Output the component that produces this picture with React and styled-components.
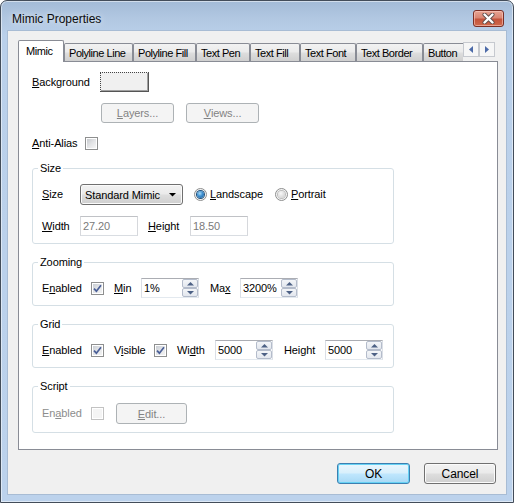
import React from 'react';
import styled, { createGlobalStyle } from 'styled-components';

const Global = createGlobalStyle`
  html, body { margin: 0; padding: 0; background: #fff; }
  body { font-family: "Liberation Sans", Arial, sans-serif; font-size: 11px; color: #000; letter-spacing: -0.1px; }
  * { box-sizing: border-box; }
`;

const Window = styled.div`
  width: 514px;
  height: 503px;
  border: 1px solid #434d5a;
  border-radius: 7px 7px 0 0;
  background: linear-gradient(to bottom, #a3bbd7 0px, #b2c8e2 18px, #bad0ea 34px, #bcd2ec 100%);
  box-shadow: inset 0 0 0 1px rgba(255, 255, 255, 0.5);
  display: flex;
  flex-direction: column;
  overflow: hidden;
`;

const TitleBar = styled.div`
  height: 29px;
  flex-shrink: 0;
  display: flex;
  align-items: center;
  justify-content: space-between;
  padding: 6px 9px 0 11px;
`;

const Title = styled.span`
  font-size: 12px;
  letter-spacing: 0;
  color: #0b0b0b;
  text-shadow: 0 0 6px rgba(255, 255, 255, 0.9);
`;

const CloseButton = styled.div`
  width: 31px;
  height: 17px;
  border: 1px solid #7a2f25;
  border-radius: 3px;
  background: linear-gradient(to bottom, #e8a493 0%, #d98673 45%, #c4533b 55%, #cf6a4d 100%);
  box-shadow: inset 0 0 0 1px rgba(255, 210, 200, 0.55);
  display: flex;
  align-items: center;
  justify-content: center;
`;

const Client = styled.div`
  flex: 1;
  margin: 0 6px 7px;
  border: 1px solid #a8bcd4;
  background: #f0f0f0;
  padding: 9px 8px 0 10px;
  display: flex;
  flex-direction: column;
`;

const TabRow = styled.div`
  display: flex;
  height: 21px;
  flex-shrink: 0;
  position: relative;
  z-index: 1;
`;

const TabStrip = styled.div`
  display: flex;
  align-items: flex-start;
  width: 445px;
  height: 22px;
  overflow: hidden;
  flex-shrink: 0;
`;

const Tab = styled.div`
  flex-shrink: 0;
  width: ${p => p.$w}px;
  height: ${p => (p.$sel ? 22 : 18)}px;
  margin-top: ${p => (p.$sel ? 0 : 3)}px;
  border: 1px solid #898c95;
  border-bottom: none;
  border-radius: 2px 2px 0 0;
  background: ${p =>
    p.$sel
      ? '#fff'
      : 'linear-gradient(to bottom, #f2f2f2 0%, #ebebeb 45%, #dddddd 55%, #cfcfcf 100%)'};
  display: flex;
  align-items: center;
  padding: ${p => (p.$sel ? '0 0 2px 7px' : '0 0 0 4px')};
  white-space: nowrap;
  letter-spacing: -0.45px;
  overflow: hidden;
`;

const TabScroll = styled.div`
  display: flex;
  margin-top: 2px;
`;

const ScrollBtn = styled.div`
  width: 16px;
  height: 15px;
  border: 1px solid #c6c9cf;
  background: #f6f6f6;
  display: flex;
  align-items: center;
  justify-content: center;
`;

const Panel = styled.div`
  height: 389px;
  flex-shrink: 0;
  border: 1px solid #898c95;
  background: #fff;
  padding: 10px 13px 0 13px;
  display: flex;
  flex-direction: column;
`;

const Row = styled.div`
  display: flex;
  align-items: center;
  height: ${p => p.$h || 20}px;
  margin-top: ${p => p.$mt || 0}px;
  padding-left: ${p => p.$pl || 0}px;
  gap: ${p => p.$gap || 0}px;
  flex-shrink: 0;
`;

const Label = styled.span`
  flex-shrink: 0;
  width: ${p => (p.$w ? `${p.$w}px` : 'auto')};
  color: ${p => (p.$disabled ? '#8d8d8d' : '#000')};
  white-space: nowrap;
  line-height: 13px;
`;

const ColorButton = styled.div`
  width: 49px;
  height: 20px;
  background: #f0f0f0;
  border-top: 1px dotted #444;
  border-left: 1px dotted #444;
  border-right: 1px solid #555;
  border-bottom: 1px solid #555;
  box-shadow: inset -1px -1px 0 #a0a0a0;
`;

const Button = styled.div`
  flex-shrink: 0;
  width: ${p => p.$w}px;
  height: ${p => p.$h || 20}px;
  border-radius: 3px;
  display: flex;
  align-items: center;
  justify-content: center;
  border: 1px solid ${p => (p.$disabled ? '#adb2b5' : p.$default ? '#3c7fb1' : '#707070')};
  color: ${p => (p.$disabled ? '#838383' : '#000')};
  background: ${p =>
    p.$disabled
      ? '#f4f4f4'
      : p.$default
      ? 'linear-gradient(to bottom, #eaf6fd 0%, #d9f0fc 45%, #bee6fd 55%, #a7d9f5 100%)'
      : 'linear-gradient(to bottom, #f2f2f2 0%, #ebebeb 45%, #dddddd 55%, #cfcfcf 100%)'};
  box-shadow: ${p =>
    p.$disabled ? 'none' : p.$default ? 'inset 0 0 0 1px #67d2f4' : 'inset 0 0 0 1px #fbfbfb'};
  margin-right: ${p => p.$mr || 0}px;
  font-size: ${p => (p.$big ? 12 : 11)}px;
`;

const CheckBox = styled.span`
  flex-shrink: 0;
  width: 13px;
  height: 13px;
  border: 1px solid ${p => (p.$disabled ? '#c2c2c2' : '#8e8f8f')};
  padding: 1px;
  background: #fff;
  margin-right: ${p => p.$mr || 0}px;
  display: flex;
`;

const CheckInner = styled.span`
  flex: 1;
  display: flex;
  align-items: center;
  justify-content: center;
  background: ${p =>
    p.$disabled
      ? '#f4f4f4'
      : p.$checked
      ? 'linear-gradient(135deg, #c9cdd3 0%, #e3e5e8 50%, #f2f2f2 100%)'
      : 'linear-gradient(135deg, #c6c9cd 0%, #e3e4e6 50%, #f6f6f6 100%)'};
`;

const Fieldset = styled.fieldset`
  margin: ${p => p.$mt || 0}px 0 0 0;
  width: 362px;
  border: 1px solid #d5dfe5;
  border-radius: 3px;
  padding: ${p => p.$pt || 9}px 9px ${p => p.$pb || 7}px 9px;
  display: flex;
  flex-direction: column;
  gap: 11px;
  flex-shrink: 0;
`;

const Legend = styled.legend`
  padding: 0 2px;
  margin-left: -4px;
  line-height: 13px;
  font-size: 11px;
  color: ${p => (p.$disabled ? '#8d8d8d' : '#000')};
`;

const Combo = styled.div`
  flex-shrink: 0;
  width: 103px;
  height: 21px;
  border: 1px solid #707070;
  border-radius: 3px;
  background: linear-gradient(to bottom, #f2f2f2 0%, #ebebeb 45%, #dddddd 55%, #cfcfcf 100%);
  box-shadow: inset 0 0 0 1px #fbfbfb;
  display: flex;
  align-items: center;
  justify-content: space-between;
  padding: 0 6px 0 4px;
  margin-right: 11px;
`;

const Radio = styled.span`
  flex-shrink: 0;
  width: 13px;
  height: 13px;
  border-radius: 50%;
  border: 1px solid #8e8f8f;
  background: #f4f4f4;
  display: flex;
  align-items: center;
  justify-content: center;
  margin-right: 3px;
`;

const RadioDot = styled.span`
  width: 7px;
  height: 7px;
  border-radius: 50%;
  background: ${p =>
    p.$on
      ? 'radial-gradient(circle at 40% 35%, #a9dcf7 0%, #3d8ed0 45%, #1c5a93 100%)'
      : 'radial-gradient(circle at 40% 35%, #f8f8f8 0%, #dcdcdc 60%, #c8c8c8 100%)'};
  box-shadow: ${p => (p.$on ? '0 0 0 1px #1f4f7a' : '0 0 0 1px #bcbcbc')};
`;

const RadioItem = styled.span`
  display: flex;
  align-items: center;
  width: ${p => (p.$w ? `${p.$w}px` : 'auto')};
  flex-shrink: 0;
`;

const TextBox = styled.div`
  flex-shrink: 0;
  width: 58px;
  height: 20px;
  border: 1px solid ${p => (p.$disabled ? '#c0c2c6' : '#abadb3')};
  border-left-color: ${p => (p.$disabled ? '#d6d8dc' : '#dbdfe6')};
  border-right-color: ${p => (p.$disabled ? '#d6d8dc' : '#dbdfe6')};
  border-bottom-color: ${p => (p.$disabled ? '#d9dde2' : '#e3e9ef')};
  background: #fff;
  color: ${p => (p.$disabled ? '#7a7a7a' : '#000')};
  display: flex;
  align-items: stretch;
  margin-right: ${p => p.$mr || 0}px;
`;

const TextValue = styled.span`
  flex: 1;
  display: flex;
  align-items: center;
  padding-left: 2px;
`;

const SpinCol = styled.span`
  width: 16px;
  display: flex;
  flex-direction: column;
`;

const SpinBtn = styled.span`
  flex: 1;
  border: 1px solid #b4bccb;
  border-radius: 2px;
  background: linear-gradient(to bottom, #f3f5f8 0%, #e3e7ee 100%);
  display: flex;
  align-items: center;
  justify-content: center;
`;

const Footer = styled.div`
  display: flex;
  justify-content: flex-end;
  gap: 14px;
  padding: 13px 2px 0 0;
`;

const Check = () => (
  <svg width="9" height="9" viewBox="0 0 9 9">
    <path d="M1 4.6 L3.4 7.2 L8 1.2" fill="none" stroke="#4a5f97" strokeWidth="1.7" />
  </svg>
);

const Tri = ({ dir, color = '#4a63a0' }) => {
  const d = {
    up: 'M0 3.5 L3.5 0 L7 3.5 Z',
    down: 'M0 0 L7 0 L3.5 3.5 Z',
  }[dir];
  return (
    <svg width="7" height="4" viewBox="0 0 7 4">
      <path d={d} fill={color} />
    </svg>
  );
};

const SideTri = ({ dir }) => (
  <svg width="4" height="7" viewBox="0 0 4 7">
    <path d={dir === 'left' ? 'M4 0 L0 3.5 L4 7 Z' : 'M0 0 L4 3.5 L0 7 Z'} fill="#4c6aa8" />
  </svg>
);

const CheckField = ({ checked, disabled, mr }) => (
  <CheckBox $disabled={disabled} $mr={mr}>
    <CheckInner $checked={checked} $disabled={disabled}>
      {checked && <Check />}
    </CheckInner>
  </CheckBox>
);

const SpinField = ({ value, mr }) => (
  <TextBox $mr={mr}>
    <TextValue>{value}</TextValue>
    <SpinCol>
      <SpinBtn><Tri dir="up" color="#4d6185" /></SpinBtn>
      <SpinBtn><Tri dir="down" color="#4d6185" /></SpinBtn>
    </SpinCol>
  </TextBox>
);

const tabs = [
  { label: 'Mimic', w: 46, sel: true },
  { label: 'Polyline Line', w: 69 },
  { label: 'Polyline Fill', w: 63 },
  { label: 'Text Pen', w: 54 },
  { label: 'Text Fill', w: 50 },
  { label: 'Text Font', w: 56 },
  { label: 'Text Border', w: 67 },
  { label: 'Button', w: 60 },
];

export default function App() {
  return (
    <>
      <Global />
      <Window>
        <TitleBar>
          <Title>Mimic Properties</Title>
          <CloseButton>
            <svg width="13" height="11" viewBox="0 0 13 11">
              <path d="M2.5 1.5 L10.5 9.5 M10.5 1.5 L2.5 9.5" stroke="#5b4a48" strokeWidth="4" strokeLinecap="round" />
              <path d="M2.5 1.5 L10.5 9.5 M10.5 1.5 L2.5 9.5" stroke="#ffffff" strokeWidth="2.4" strokeLinecap="round" />
            </svg>
          </CloseButton>
        </TitleBar>
        <Client>
          <TabRow>
            <TabStrip>
              {tabs.map(t => (
                <Tab key={t.label} $w={t.w} $sel={t.sel}>{t.label}</Tab>
              ))}
            </TabStrip>
            <TabScroll>
              <ScrollBtn><SideTri dir="left" /></ScrollBtn>
              <ScrollBtn><SideTri dir="right" /></ScrollBtn>
            </TabScroll>
          </TabRow>
          <Panel>
            <Row>
              <Label $w={68}><u>B</u>ackground</Label>
              <ColorButton />
            </Row>
            <Row $mt={11} $pl={69} $gap={12}>
              <Button $w={73} $disabled><u>L</u>ayers...</Button>
              <Button $w={73} $disabled><u>V</u>iews...</Button>
            </Row>
            <Row $mt={14} $h={13}>
              <Label $w={53}><u>A</u>nti-Alias</Label>
              <CheckField />
            </Row>

            <Fieldset $mt={12}>
              <Legend>Size</Legend>
              <Row $h={21}>
                <Label $w={38}><u>S</u>ize</Label>
                <Combo>
                  <span>Standard Mimic</span>
                  <Tri dir="down" color="#000" />
                </Combo>
                <RadioItem $w={81}>
                  <Radio><RadioDot $on /></Radio>
                  <Label><u>L</u>andscape</Label>
                </RadioItem>
                <RadioItem>
                  <Radio><RadioDot /></Radio>
                  <Label><u>P</u>ortrait</Label>
                </RadioItem>
              </Row>
              <Row>
                <Label $w={38}><u>W</u>idth</Label>
                <TextBox $disabled $mr={10}><TextValue>27.20</TextValue></TextBox>
                <Label $w={42}><u>H</u>eight</Label>
                <TextBox $disabled><TextValue>18.50</TextValue></TextBox>
              </Row>
            </Fieldset>

            <Fieldset $mt={12}>
              <Legend>Zooming</Legend>
              <Row>
                <Label $w={49}>E<u>n</u>abled</Label>
                <CheckField checked mr={10} />
                <Label $w={27}><u>M</u>in</Label>
                <SpinField value="1%" mr={11} />
                <Label $w={30}>Ma<u>x</u></Label>
                <SpinField value="3200%" />
              </Row>
            </Fieldset>

            <Fieldset $mt={12}>
              <Legend>Grid</Legend>
              <Row>
                <Label $w={49}><u>E</u>nabled</Label>
                <CheckField checked mr={10} />
                <Label $w={40}>V<u>i</u>sible</Label>
                <CheckField checked mr={10} />
                <Label $w={38}>Wi<u>d</u>th</Label>
                <SpinField value="5000" mr={11} />
                <Label $w={41}>Hei<u>g</u>ht</Label>
                <SpinField value="5000" />
              </Row>
            </Fieldset>

            <Fieldset $mt={12} $pt={10} $pb={8}>
              <Legend>Script</Legend>
              <Row $h={21}>
                <Label $w={49} $disabled>En<u>a</u>bled</Label>
                <CheckField disabled mr={12} />
                <Button $w={71} $h={21} $disabled><u>E</u>dit...</Button>
              </Row>
            </Fieldset>
          </Panel>
          <Footer>
            <Button $w={73} $h={21} $default $big>OK</Button>
            <Button $w={72} $h={21} $big>Cancel</Button>
          </Footer>
        </Client>
      </Window>
    </>
  );
}
